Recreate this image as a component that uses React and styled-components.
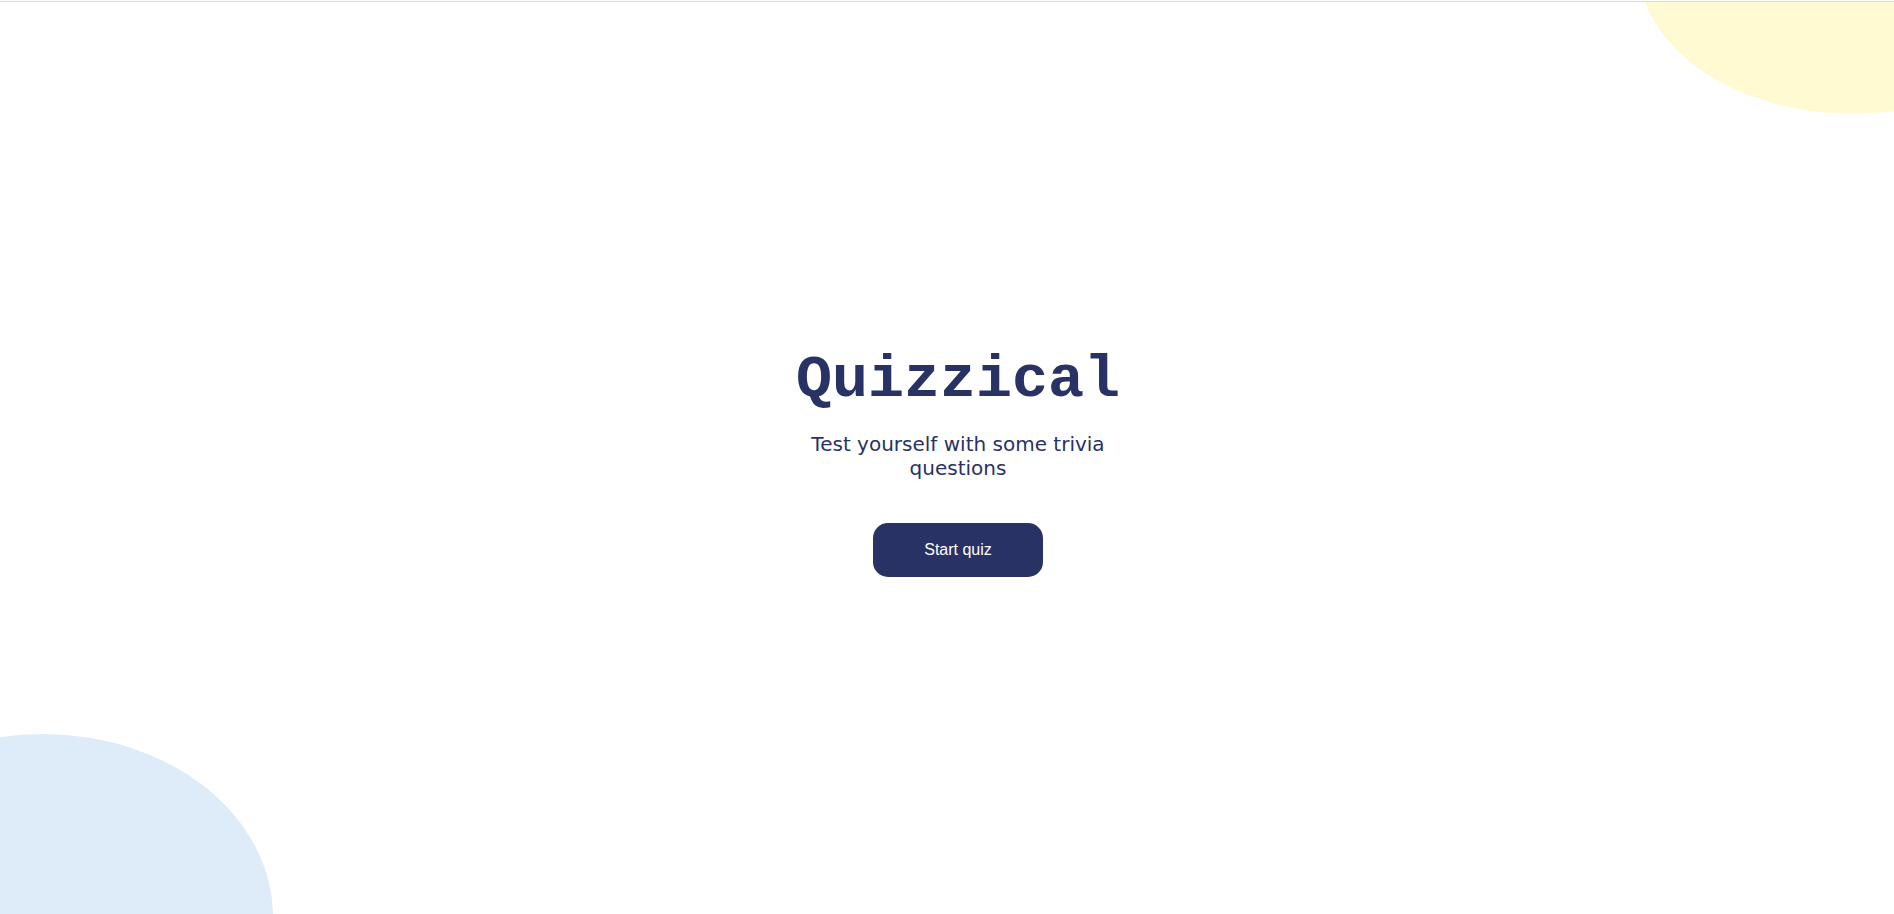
import React from 'react'
import styled, { createGlobalStyle } from 'styled-components'

const GlobalStyle = createGlobalStyle`
    html, body {
        margin: 0;
        padding: 0;
        background: #ffffff;
    }
    body {
        overflow: hidden;
    }
`;

const App = () => {
    return (
        <Page>
            <GlobalStyle />
            <BlobTop />
            <BlobBottom />
            <Intro>
                <Title>Quizzical</Title>
                <Subtitle>Test yourself with some trivia questions</Subtitle>
                <StartButton>Start quiz</StartButton>
            </Intro>
        </Page>
    )
}

const Page = styled.main`
    position: relative;
    overflow: hidden;
    box-sizing: border-box;
    height: 100vh;
    margin-top: 1px;
    padding-left: 22px;
    border-top: 1px solid #dadada;
    display: flex;
    align-items: center;
    justify-content: center;
    background: #ffffff;
`;

const BlobTop = styled.div`
    position: absolute;
    left: 1638px;
    top: -188px;
    width: 430px;
    height: 300px;
    border-radius: 50%;
    background: #fffad1;
`;

const BlobBottom = styled.div`
    position: absolute;
    left: -187px;
    top: 732px;
    width: 460px;
    height: 366px;
    border-radius: 50%;
    background: #deebf8;
`;

const Intro = styled.section`
    position: relative;
    z-index: 1;
    display: flex;
    flex-direction: column;
    align-items: center;
    text-align: center;
    color: #293264;
    margin-top: 6px;
`;

const Title = styled.h1`
    margin: 0;
    font-family: "Liberation Mono", "Courier New", monospace;
    font-weight: 700;
    font-size: 60px;
    line-height: 1.15;
`;

const Subtitle = styled.p`
    margin: 17px 0 0;
    max-width: 320px;
    font-family: "DejaVu Sans", Verdana, sans-serif;
    font-size: 20px;
    line-height: 24px;
`;

const StartButton = styled.button`
    margin-top: 43px;
    width: 170px;
    height: 54px;
    border: none;
    border-radius: 15px;
    background: #293264;
    color: #ffffff;
    font-family: "Liberation Sans", Arial, sans-serif;
    font-size: 16px;
    cursor: pointer;
`;

export default App
